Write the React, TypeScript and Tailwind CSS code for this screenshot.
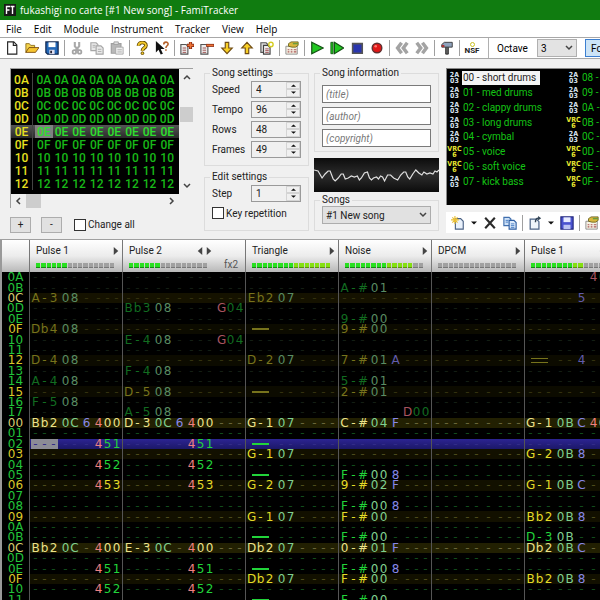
import { Fragment, type ReactNode } from "react";
import clsx from "clsx";

type Channel = {
  name: string;
  level: number;
  fx: number;
  width: string;
  rows: Record<number, string>;
};

const ui = "font-[Roboto,sans-serif]";

const menus = ["File", "Edit", "Module", "Instrument", "Tracker", "View", "Help"];

const frames = ["0A", "0B", "0C", "0D", "0E", "0F", "10", "11", "12"];

const songSettings = [
  { label: "Speed", value: "4" },
  { label: "Tempo", value: "96" },
  { label: "Rows", value: "48" },
  { label: "Frames", value: "49" },
];

const instruments = [
  { id: "00", name: "short drums", chip: "2A03" },
  { id: "01", name: "med drums", chip: "2A03" },
  { id: "02", name: "clappy drums", chip: "2A03" },
  { id: "03", name: "long drums", chip: "2A03" },
  { id: "04", name: "cymbal", chip: "2A03" },
  { id: "05", name: "voice", chip: "VRC6" },
  { id: "06", name: "soft voice", chip: "VRC6" },
  { id: "07", name: "kick bass", chip: "2A03" },
  { id: "08", name: "", chip: "2A03" },
  { id: "09", name: "", chip: "2A03" },
  { id: "0A", name: "", chip: "2A03" },
  { id: "0B", name: "", chip: "VRC6" },
  { id: "0C", name: "", chip: "2A03" },
  { id: "0D", name: "", chip: "VRC6" },
  { id: "0E", name: "", chip: "VRC6" },
  { id: "0F", name: "", chip: "VRC6" },
];

// 0A..17 belong to the previous frame, 00..11 to the current one
const PREVIOUS = 14;
const CURSOR = 16;
const rowNumbers = Array.from({ length: 32 }, (_, i) => (i < PREVIOUS ? i + 10 : i - PREVIOUS));

// note, instrument, volume, effects
const channels: Channel[] = [
  {
    name: "Pulse 1",
    level: 6,
    fx: 1,
    width: "w-[93px]",
    rows: {
      2: "A-3 08", 5: "Db4 08", 8: "D-4 08", 10: "A-4 08", 12: "F-5 08",
      14: "Bb2 0C 6 400", 16: "... .. . 451", 18: "... .. . 452", 20: "... .. . 453",
      26: "Bb2 0C . 400", 28: "... .. . 451", 30: "... .. . 452",
    },
  },
  {
    name: "Pulse 2",
    level: 6,
    fx: 2,
    width: "w-[123px]",
    rows: {
      3: "Bb3 08 . ... G04", 6: "E-4 08 . ... G04", 9: "F-4 08", 11: "D-5 08", 13: "A-5 08",
      14: "D-3 0C 6 400", 16: "... .. . 451", 18: "... .. . 452", 20: "... .. . 453",
      26: "E-3 0C . 400", 28: "... .. . 451", 30: "... .. . 452",
    },
  },
  {
    name: "Triangle",
    level: 15,
    fx: 1,
    width: "w-[93px]",
    rows: {
      2: "Eb2 07", 5: "cut", 8: "D-2 07", 11: "cut", 14: "G-1 07", 16: "cut", 17: "G-1 07",
      19: "cut", 20: "G-2 07", 23: "G-1 07", 25: "cut", 26: "Db2 07", 28: "cut", 29: "Db2 07", 31: "cut",
    },
  },
  {
    name: "Noise",
    level: 13,
    fx: 1,
    width: "w-[93px]",
    rows: {
      1: "A-# 01", 4: "9-# 00", 5: "9-# 00", 8: "7-# 01 A", 10: "5-# 01", 11: "2-# 01",
      13: "... .. . D00", 14: "C-# 04 F", 19: "F-# 00 8", 20: "9-# 02 F", 22: "F-# 00 8",
      23: "F-# 00", 25: "F-# 00", 26: "0-# 01 F", 28: "F-# 00 8", 29: "F-# 00", 31: "F-# 00",
    },
  },
  { name: "DPCM", level: 0, fx: 1, width: "w-[93px]", rows: {} },
  {
    name: "Pulse 1",
    level: 10,
    fx: 2,
    width: "w-[123px]",
    rows: {
      0: "... .. . 400", 2: "... .. 5", 8: "rel .. 4", 14: "G-1 0B C 400", 17: "G-2 0B 8",
      20: "G-1 0B C", 23: "Bb2 0B 8", 25: "D-3 0B", 26: "Db2 0B C", 29: "Bb2 0B 8",
    },
  },
];

function Svg({ children }: { children: ReactNode }) {
  return (
    <svg viewBox="0 0 16 16" className="h-[14px] w-[14px]" aria-hidden="true">
      {children}
    </svg>
  );
}

const page = "M3 1h7l3.5 3.5V15H3z";

const icons = {
  create: (
    <Svg>
      <path d={page} fill="#fff" stroke="#222" strokeWidth="1.3" />
      <path d="M9.5 1v4h4" fill="none" stroke="#222" strokeWidth="1.3" />
    </Svg>
  ),
  open: (
    <Svg>
      <path d="M1 13V3h4l1.5 2H11v3H5z" fill="#f4d34c" stroke="#8c6a14" />
      <path d="M1 13l3.5-5.5H16L12 13z" fill="#f7c531" stroke="#7a4d12" />
    </Svg>
  ),
  save: (
    <Svg>
      <path d="M1 1h14v14H3l-2-2z" fill="#2468b8" stroke="#10264e" strokeWidth="1.4" />
      <path d="M4 1.5h8V7H4z" fill="#fff" />
      <path d="M5 10h6v5H5z" fill="#dde" />
      <path d="M6 11h2v3H6z" fill="#223" />
    </Svg>
  ),
  cut: (
    <Svg>
      <path d="M5.5 1v5l4 5M10.5 1v5l-4 5" fill="none" stroke="#aaa" strokeWidth="2.4" />
      <circle cx="5" cy="12.5" r="2" fill="none" stroke="#a4a4a4" strokeWidth="2" />
      <circle cx="11" cy="12.5" r="2" fill="none" stroke="#a4a4a4" strokeWidth="2" />
    </Svg>
  ),
  copy: (
    <Svg>
      <path d="M1 2h6l2 2v7H1z" fill="#e8e8e8" stroke="#a6a6a6" strokeWidth="1.3" />
      <path d="M7 5.5h5.5L15 8v7H7z" fill="#e8e8e8" stroke="#a6a6a6" strokeWidth="1.3" />
      <path d="M3 5h3M3 7h3M9 9.5h4M9 12h4" stroke="#aaa" />
    </Svg>
  ),
  paste: (
    <Svg>
      <path d="M1.5 3h11v11h-11z" fill="#b8b8b8" stroke="#a0a0a0" strokeWidth="1.4" />
      <path d="M4.5 1h5v3h-5z" fill="#ddd" stroke="#a0a0a0" />
      <path d="M6.5 7h8.5v8H6.5z" fill="#eee" stroke="#a6a6a6" />
      <path d="M8.5 10h5M8.5 12.5h5" stroke="#aaa" />
    </Svg>
  ),
  help: (
    <Svg>
      <path d="M4 5.5C4 0.5 12.5 0.5 12.5 5c0 3-4 2.8-4 6" fill="none" stroke="#5b4300" strokeWidth="4.2" />
      <path d="M4 5.5C4 0.5 12.5 0.5 12.5 5c0 3-4 2.8-4 6" fill="none" stroke="#f3c92d" strokeWidth="2.2" />
      <circle cx="8.5" cy="14" r="1.6" fill="#f3c92d" stroke="#5b4300" />
    </Svg>
  ),
  whatsThis: (
    <Svg>
      <path d="M1 0v13l3-3 2.500 5.500 2.500-1L6.500 9H11z" fill="#111" />
      <path d="M10 4C10 0.5 15 0.5 15 3.5c0 2-2.5 2-2.5 4.5M12.5 9.5V11" fill="none" stroke="#b5622c" strokeWidth="1.8" />
    </Svg>
  ),
  addFrame: (
    <Svg>
      <path d="M1 4h6l2 2v9H1z" fill="#eee" stroke="#555" strokeWidth="1.3" />
      <path d="M3 8h4M3 10.5h4M3 13h4" stroke="#944" />
      <path d="M12 1v8M8 5h8" stroke="#7d2413" strokeWidth="3.6" />
      <path d="M12 1.5v7M8.5 5h7" stroke="#ee7436" strokeWidth="1.8" />
    </Svg>
  ),
  removeFrame: (
    <Svg>
      <path d="M1 4h6l2 2v9H1z" fill="#eee" stroke="#555" strokeWidth="1.3" />
      <path d="M3 8h4M3 10.5h4M3 13h4" stroke="#944" />
      <path d="M7 5h9" stroke="#7d2413" strokeWidth="3.4" />
      <path d="M7.5 5h8" stroke="#ee7436" strokeWidth="1.8" />
    </Svg>
  ),
  moveDown: (
    <Svg>
      <path d="M6 1.5h4V8h4l-6 6.5L2 8h4z" fill="#f8cf25" stroke="#704c14" strokeWidth="1.3" />
    </Svg>
  ),
  moveUp: (
    <Svg>
      <path d="M6 14.5h4V8h4L8 1.5 2 8h4z" fill="#f8cf25" stroke="#704c14" strokeWidth="1.3" />
    </Svg>
  ),
  duplicate: (
    <Svg>
      <path d="M1 2h6l2 2v9H1z" fill="#ddd" stroke="#555" strokeWidth="1.3" />
      <path d="M4 5h5l2.5 2.5V15H4z" fill="#eee" stroke="#444" strokeWidth="1.3" />
      <path d="M6 9h4M6 11h4M6 13h4" stroke="#944" />
      <circle cx="12.5" cy="4" r="2.5" fill="#fff" stroke="#d4cc20" strokeWidth="1.6" />
    </Svg>
  ),
  properties: (
    <Svg>
      <path d="M1 6h13v9H1z" fill="#f6f3e6" stroke="#888" />
      <path d="M3 10h2M3 12.5h2M6.5 10h2M6.5 12.5h2M10 10h3M10 12.5h3" stroke="#a55" strokeWidth="1.4" />
      <path d="M4 3l3-2h8v4l-3 2H8L4 6z" fill="#d9b73e" stroke="#6c6620" />
      <path d="M9 3h6" stroke="#6b9c3e" strokeWidth="1.6" />
    </Svg>
  ),
  play: (
    <Svg>
      <path d="M2 1.5L15 8 2 14.5z" fill="#21c821" stroke="#145214" strokeWidth="1.4" />
    </Svg>
  ),
  playPattern: (
    <Svg>
      <path d="M1 1.5h2.5v13H1z" fill="#21c821" stroke="#145214" />
      <path d="M5 1.5L15.5 8 5 14.5z" fill="#21c821" stroke="#145214" strokeWidth="1.4" />
    </Svg>
  ),
  stop: (
    <Svg>
      <path d="M3 3h11v11H3z" fill="#2a36ae" stroke="#555" strokeWidth="1.8" />
    </Svg>
  ),
  record: (
    <Svg>
      <circle cx="8" cy="8" r="5.5" fill="#e01717" stroke="#5f3030" strokeWidth="1.6" />
      <circle cx="6.5" cy="6" r="1.5" fill="#ff7a70" />
    </Svg>
  ),
  previous: (
    <Svg>
      <path d="M7.5 2L3 8l4.5 6M14 2L9.5 8l4.5 6" fill="none" stroke="#a3a3a3" strokeWidth="4" />
    </Svg>
  ),
  next: (
    <Svg>
      <path d="M2 2l4.5 6L2 14M8.5 2L13 8l-4.5 6" fill="none" stroke="#a3a3a3" strokeWidth="4" />
    </Svg>
  ),
  settings: (
    <Svg>
      <path d="M6.5 6h3v9h-3z" fill="#666" stroke="#222" />
      <path d="M2 4l3-2.5h9V7H2z" fill="#8fa3bd" stroke="#333" />
      <path d="M2 4.5h3V7H2z" fill="#a33" />
    </Svg>
  ),
  removeInstrument: (
    <Svg>
      <path d="M2.5 2l11 12M13.5 2l-11 12" fill="none" stroke="#2b2b2b" strokeWidth="2.4" />
    </Svg>
  ),
  newInstrument: (
    <Svg>
      <path d="M5 3h6l3 3v9H5z" fill="#eaf2fc" stroke="#4b6285" strokeWidth="1.3" />
      <path d="M4.5 0v9M0 4.5h9M1.5 1.5l6 6M7.5 1.5l-6 6" stroke="#eabf33" strokeWidth="1.3" />
    </Svg>
  ),
  cloneInstrument: (
    <Svg>
      <path d="M1 1.5h6l2 2V11H1z" fill="#cfe2f8" stroke="#416fae" strokeWidth="1.3" />
      <path d="M7 5h5.500L15 7.500V15H7z" fill="#dceafb" stroke="#2f5fa3" strokeWidth="1.3" />
      <path d="M9 9h4M9 11h4M9 13h4M3 5h3M3 7h3" stroke="#3f77c0" />
    </Svg>
  ),
  loadInstrument: (
    <Svg>
      <path d="M2.500 3.500h7l3 3V15h-10z" fill="#eef4fb" stroke="#4b6285" strokeWidth="1.4" />
      <path d="M8.500 7c0-3 1-4.500 3.500-4.500" fill="none" stroke="#345" strokeWidth="1.6" />
      <path d="M11.500 0L15 2.500 11.500 5z" fill="#345" />
    </Svg>
  ),
  saveInstrument: (
    <Svg>
      <path d="M1 1h14v14H1z" fill="#4a52cf" stroke="#23297d" strokeWidth="1.3" />
      <path d="M4 1.5h8V7H4z" fill="#e8ecff" />
      <path d="M4 10h8v5H4z" fill="#bcc3f2" />
    </Svg>
  ),
};

const toolbar: [string, ReactNode][][] = [
  [["New", icons.create], ["Open", icons.open], ["Save", icons.save]],
  [["Cut", icons.cut], ["Copy", icons.copy], ["Paste", icons.paste]],
  [["Help", icons.help], ["What's this", icons.whatsThis]],
  [
    ["Insert frame", icons.addFrame],
    ["Remove frame", icons.removeFrame],
    ["Move frame down", icons.moveDown],
    ["Move frame up", icons.moveUp],
    ["Duplicate frame", icons.duplicate],
  ],
  [["Module properties", icons.properties]],
  [["Play", icons.play], ["Play pattern", icons.playPattern], ["Stop", icons.stop], ["Record", icons.record]],
  [["Previous song", icons.previous], ["Next song", icons.next]],
  [["Settings", icons.settings]],
];

function Separator() {
  return (
    <div className="flex w-[5px] shrink-0 justify-center">
      <div className="h-4 w-px bg-[#a0a0a0]" />
    </div>
  );
}

function IconButton({ label, children }: { label: string; children: ReactNode }) {
  return (
    <button aria-label={label} className="flex h-5 w-5 shrink-0 items-center justify-center">
      {children}
    </button>
  );
}

function Chevron({ dir }: { dir: "up" | "down" | "left" | "right" }) {
  const d = {
    up: "M1 6l3-3 3 3",
    down: "M1 2l3 3 3-3",
    left: "M6 1L3 4l3 3",
    right: "M2 1l3 3-3 3",
  }[dir];
  return (
    <svg viewBox="0 0 8 8" className="h-2 w-2" aria-hidden="true">
      <path d={d} fill="none" stroke="#444" strokeWidth="1.5" />
    </svg>
  );
}

function Triangle({ dir, className }: { dir: "up" | "down" | "left" | "right"; className: string }) {
  const d = { up: "M0 7L4 1l4 6z", down: "M0 1h8L4 7z", left: "M7 0v8L1 4z", right: "M1 0l6 4-6 4z" }[dir];
  return (
    <svg viewBox="0 0 8 8" preserveAspectRatio="none" className={className} aria-hidden="true">
      <path d={d} fill="currentColor" />
    </svg>
  );
}

function TitleBar() {
  return (
    <header className="flex h-5 shrink-0 items-center gap-1 bg-[#107c10] px-1">
      <svg viewBox="0 0 12 12" className="h-3 w-3" aria-hidden="true">
        <path d="M0 0h12v12H0z" fill="#191919" />
        <path d="M2.5 10V2.5H6M2.5 6h3M6.5 2.5h4M8.5 2.5V10" fill="none" stroke="#fff" strokeWidth="1.4" />
      </svg>
      <h1 className="text-[10px] leading-5 whitespace-nowrap text-white">fukashigi no carte [#1 New song] - FamiTracker</h1>
    </header>
  );
}

function MenuBar() {
  return (
    <nav className="flex h-[17px] shrink-0 items-center gap-3 bg-white px-1.5 text-[10px] text-black">
      {menus.map((m) => (
        <button key={m} className="leading-4">
          {m}
        </button>
      ))}
    </nav>
  );
}

function Toolbar() {
  return (
    <div className={clsx("flex h-[22px] shrink-0 items-center border-y border-[#a8a8a8] bg-white pl-0.5 text-[10px]", ui)}>
      {toolbar.map((group, i) => (
        <Fragment key={i}>
          {group.map(([label, icon]) => (
            <IconButton key={label} label={label}>
              {icon}
            </IconButton>
          ))}
          <Separator />
        </Fragment>
      ))}
      <button className="flex h-5 w-5 shrink-0 flex-col items-center justify-center">
        <span className="h-[5px] w-[5px] rounded-full border border-[#c8c020]" />
        <span className="text-[8px] leading-2 font-bold text-[#222]">NSF</span>
      </button>
      <div className="mx-1.5 h-5 w-px shrink-0 bg-[#b0b0b0]" />
      <label htmlFor="octave" className="ml-0.5 w-10 shrink-0">
        Octave
      </label>
      <div className="relative w-10 shrink-0">
        <select id="octave" className="h-[18px] w-full appearance-none border border-[#b0b0b0] bg-[#e3e3e3] pl-[3px]">
          <option>3</option>
        </select>
        <div className="pointer-events-none absolute top-[5px] right-1">
          <Chevron dir="down" />
        </div>
      </div>
      <button className="ml-2 h-[18px] shrink-0 border border-[#3c7fd0] bg-[#cce4f7] px-[5px] whitespace-nowrap">Follow mode</button>
    </div>
  );
}

function FrameEditor() {
  return (
    <div className="w-[183px] shrink-0 pt-[9px]">
      <div className="grid grid-cols-[168px_15px] grid-rows-[125px_14px] border-t border-l border-[#a0a0a0]">
        <table className="block bg-black pt-1 font-['Liberation_Sans_Narrow','Roboto',sans-serif] text-[12px] font-medium">
          <tbody className="block">
            {frames.map((f) => (
              <tr
                key={f}
                className={clsx("flex h-[13px] leading-[14px]", f === "0E" && "bg-linear-to-b from-[#555] to-[#2a2a2a]")}
              >
                <th className="w-[22px] border-r border-[#444] text-center font-medium text-[#e8e020]">{f}</th>
                {Array.from({ length: 8 }, (_, c) => (
                  <td
                    key={c}
                    className={clsx(
                      "flex-1 text-center first-of-type:ml-[2px] last:mr-[3px]",
                      f === "0E" ? "text-[#2de02d]" : "text-[#18b818]",
                      f === "0E" && c === 0 && "bg-[#808080]",
                    )}
                  >
                    {f}
                  </td>
                ))}
              </tr>
            ))}
          </tbody>
        </table>
        <div className="flex flex-col items-center py-1">
          <Chevron dir="up" />
          <div className="mt-[26px] mb-auto h-[15px] w-[13px] bg-[#cdcdcd]" />
          <Chevron dir="down" />
        </div>
        <div className="flex items-center px-[3px]">
          <Chevron dir="left" />
          <div className="ml-1 h-[14px] w-[15px] bg-[#cdcdcd]" />
          <div className="ml-auto">
            <Chevron dir="right" />
          </div>
        </div>
      </div>
      <div className="mt-2 flex h-[17px] items-center">
        <button className="h-4 w-[21px] border border-[#adadad] bg-[#e1e1e1] leading-3">+</button>
        <button className="ml-[10px] h-4 w-[21px] border border-[#adadad] bg-[#e1e1e1] leading-3">-</button>
        <label className="ml-3 flex items-center gap-[2px]">
          <input type="checkbox" className="h-3 w-3 appearance-none border border-[#333] bg-white" />
          Change all
        </label>
      </div>
    </div>
  );
}

function Spinner({ label, value }: { label: string; value: string }) {
  const id = label.toLowerCase();
  return (
    <div className="flex h-5 items-center">
      <label htmlFor={id} className="w-[39px]">
        {label}
      </label>
      <div className="flex h-[17px] w-[50px] border border-[#9a9a9a]">
        <input id={id} defaultValue={value} className="w-[34px] bg-[#f0f0f0] pl-1" />
        <div className="flex flex-1 flex-col">
          <button aria-label={`${label} up`} className="flex flex-1 items-center justify-center border border-[#d4d4d4] text-[#111]">
            <Triangle dir="up" className="h-[3px] w-[5px]" />
          </button>
          <button aria-label={`${label} down`} className="flex flex-1 items-center justify-center border border-[#d4d4d4] text-[#111]">
            <Triangle dir="down" className="h-[3px] w-[5px]" />
          </button>
        </div>
      </div>
    </div>
  );
}

function Group({ title, className, children }: { title: string; className: string; children: ReactNode }) {
  return (
    <fieldset className={clsx("border border-[#dcdcdc] px-[7px]", className)}>
      <legend className="-ml-0.5 h-3 px-0.5 leading-3">{title}</legend>
      {children}
    </fieldset>
  );
}

function Waveform() {
  return (
    <svg viewBox="0 0 124 34" preserveAspectRatio="none" className="mt-1.5 h-[34px] w-full" aria-hidden="true">
      <defs>
        <linearGradient id="scope" x1="0" y1="0" x2="0" y2="1">
          <stop offset="0" stopColor="#0c0c0c" />
          <stop offset="0.5" stopColor="#2c2c2c" />
          <stop offset="1" stopColor="#0c0c0c" />
        </linearGradient>
      </defs>
      <path d="M0 0h124v34H0z" fill="url(#scope)" />
      <polyline
        points="0,12 4,13 8,20 11,16 14,13 16,13 19,21 21,23 24,20 27,16 29,16 31,21 34,20 37,18 40,19 43,18 45,22 47,20 50,15 53,14 55,20 57,22 59,20 62,19 64,21 66,18 68,19 70,23 73,17 76,17 79,20 81,21 83,22 86,17 89,14 91,14 93,19 95,21 98,16 101,12 104,15 107,17 109,14 112,16 115,15 118,16 120,13 122,14 124,12"
        fill="none"
        stroke="#e0e0e0"
        strokeWidth="1.2"
      />
    </svg>
  );
}

function ChipIcon({ chip }: { chip: string }) {
  const vrc = chip === "VRC6";
  return (
    <span
      className={clsx(
        "flex w-[15px] flex-col items-center font-['DejaVu_Sans_Condensed',sans-serif] text-[7px] leading-[6px] font-bold",
        vrc ? "text-[#e8e830]" : "text-[#d8e4f0]",
      )}
    >
      <span>{vrc ? "VRC" : "2A"}</span>
      <span>{vrc ? "6" : "03"}</span>
    </span>
  );
}

function InstrumentList() {
  return (
    <div className="flex min-w-0 flex-1 flex-col pt-[9px]">
      <div className="h-[137px] overflow-hidden border-t border-l border-[#888] bg-black pt-[2px]">
        <ul className="grid h-[118px] w-[238px] grid-flow-col grid-cols-[119px_119px] grid-rows-[repeat(8,minmax(0,1fr))]">
          {instruments.map((inst, i) => (
            <li key={inst.id} className="flex items-center whitespace-pre">
              <ChipIcon chip={inst.chip} />
              <span className={clsx("px-px leading-[14px]", i === 0 ? "bg-[#f4f4f4] pr-1 text-[#222]" : "text-[#14c414]")}>
                {inst.id} - {inst.name}
              </span>
            </li>
          ))}
        </ul>
      </div>
      <div className="mt-[7px] flex h-[21px] items-center overflow-hidden bg-white pl-0.5 text-[#111]">
        <IconButton label="New instrument">{icons.newInstrument}</IconButton>
        <button aria-label="New instrument options" className="flex w-3 shrink-0 justify-center">
          <Triangle dir="down" className="h-1 w-1.5" />
        </button>
        <IconButton label="Remove instrument">{icons.removeInstrument}</IconButton>
        <IconButton label="Clone instrument">{icons.cloneInstrument}</IconButton>
        <Separator />
        <IconButton label="Load instrument">{icons.loadInstrument}</IconButton>
        <button aria-label="Load instrument options" className="flex w-3 shrink-0 justify-center">
          <Triangle dir="down" className="h-1 w-1.5" />
        </button>
        <IconButton label="Save instrument">{icons.saveInstrument}</IconButton>
        <Separator />
        <IconButton label="Edit instrument">{icons.properties}</IconButton>
      </div>
    </div>
  );
}

function ControlPanel() {
  return (
    <section className={clsx("flex h-[181px] shrink-0 border-b border-[#a0a0a0] bg-[#f0f0f0] pl-[10px] text-[10px] text-[#222]", ui)}>
      <FrameEditor />
      <div className="ml-[11px] w-[103px] shrink-0 pt-2">
        <Group title="Song settings" className="h-[99px]">
          {songSettings.map((s) => (
            <Spinner key={s.label} {...s} />
          ))}
        </Group>
        <Group title="Edit settings" className="mt-[5px] h-[60px]">
          <Spinner label="Step" value="1" />
          <label className="flex h-5 items-center gap-[2px] whitespace-nowrap">
            <input type="checkbox" className="h-3 w-3 shrink-0 appearance-none border border-[#333] bg-white" />
            Key repetition
          </label>
        </Group>
      </div>
      <div className="ml-[7px] w-[125px] shrink-0 pt-2">
        <Group title="Song information" className="h-[85px]">
          <div className="flex flex-col gap-1 pt-1.5">
            {["(title)", "(author)", "(copyright)"].map((p) => (
              <input
                key={p}
                aria-label={p}
                placeholder={p}
                className="h-[18px] w-full border border-[#7a7a7a] bg-white px-[3px] italic placeholder:text-[#777]"
              />
            ))}
          </div>
        </Group>
        <Waveform />
        <Group title="Songs" className="mt-[2px] h-[37px]">
          <div className="relative">
            <select aria-label="Songs" className="h-[18px] w-full appearance-none border border-[#adadad] bg-[#e1e1e1] pl-[3px]">
              <option>#1 New song</option>
            </select>
            <div className="pointer-events-none absolute top-[5px] right-1">
              <Chevron dir="down" />
            </div>
          </div>
        </Group>
      </div>
      <div className="ml-[7px] flex min-w-0 flex-1">
        <InstrumentList />
      </div>
    </section>
  );
}

function ChannelHeader({ channel }: { channel: Channel }) {
  return (
    <th className={clsx("shrink-0 border-l border-[#777] pl-1.5 text-left font-normal", channel.width)}>
      <div className="flex h-[21px] w-[83px] items-center text-[#444]">
        <span className="flex-1 text-[#222]">{channel.name}</span>
        {channel.fx > 1 && <Triangle dir="left" className="mr-[3px] h-2 w-1.5" />}
        <Triangle dir="right" className="h-2 w-1.5" />
      </div>
      <div className="flex h-2 items-center">
        <div className="grid w-[78px] shrink-0 grid-cols-[repeat(15,minmax(0,1fr))] gap-px">
          {Array.from({ length: 15 }, (_, i) => (
            <span
              key={i}
              className={clsx(
                "h-[5px] border-b",
                i >= channel.level && "border-[#777] bg-[#a0a0a0]",
                i < channel.level && i < 8 && "border-[#158815] bg-[#28e020]",
                i < channel.level && i >= 8 && "border-[#5a9010] bg-[#84e010]",
              )}
            />
          ))}
        </div>
        {channel.fx > 1 && <span className="ml-[17px] leading-2 text-[#555]">fx{channel.fx}</span>}
      </div>
    </th>
  );
}

function PatternCell({ channel, row, tone, dash }: { channel: Channel; row: number; tone: string; dash: string }) {
  const parts = (channel.rows[row] ?? "").split(" ");
  const note = parts[0] || "...";
  const drawn = note === "cut" || note === "rel";
  const old = row < PREVIOUS;
  const inst = old ? "text-[#5a8c62]" : "text-[#80d090]";
  const fields = [
    { text: drawn ? "" : note, colors: [tone, tone, tone] },
    { text: parts[1] ?? "..", colors: [inst, inst] },
    { text: parts[2] ?? ".", colors: [old ? "text-[#625cac]" : "text-[#8888e8]"] },
    ...Array.from({ length: channel.fx }, (_, i) => ({
      text: parts[3 + i] ?? "...",
      colors: [old ? "text-[#a85460]" : "text-[#f08080]", tone, tone],
    })),
  ];

  return (
    <td className={clsx("flex shrink-0 items-center gap-[3px] border-l border-[#555] pl-px", channel.width)}>
      {fields.map((field, i) => (
        <span
          key={i}
          className={clsx("flex shrink-0", row === CURSOR && channel === channels[0] && i === 0 && "bg-[#8c8c96]")}
        >
          {i === 0 && drawn && (
            <span className={clsx("flex w-[27px] flex-col items-center gap-[3px]", tone)}>
              <span className={clsx("w-[17px] bg-current", note === "rel" ? "h-px" : "h-0.5")} />
              {note === "rel" && <span className="h-px w-[17px] bg-current" />}
            </span>
          )}
          {field.text.split("").map((c, j) => (
            <span key={j} className={clsx("w-[9px] text-center", c === "." ? dash : field.colors[j])}>
              {c === "." ? "-" : c}
            </span>
          ))}
        </span>
      ))}
    </td>
  );
}

function PatternEditor() {
  return (
    <main className="min-h-0 flex-1 overflow-hidden border-l-2 border-[#999] bg-black">
      <table className="block">
        <thead className={clsx("block bg-linear-to-b from-white via-[#ececec] to-[#b8b8b8] text-[10px]", ui)}>
          <tr className="flex h-8">
            <th className="w-[27px] shrink-0" aria-label="Row" />
            {channels.map((c, i) => (
              <ChannelHeader key={i} channel={c} />
            ))}
          </tr>
        </thead>
        <tbody className="grid h-[333px] grid-rows-[repeat(32,minmax(0,1fr))] font-['DejaVu_Sans',sans-serif] text-[12px] leading-[10px]">
          {rowNumbers.map((n, i) => {
            const strong = n % 12 === 0;
            const beat = n % 3 === 0;
            const old = i < PREVIOUS;
            let tone = strong ? "text-[#ece28a]" : beat ? "text-[#e4dc28]" : "text-[#22d43a]";
            let dash = strong ? "text-[#69653a]" : beat ? "text-[#4c4a1c]" : "text-[#124c1c]";
            if (old) {
              tone = beat ? "text-[#77731c]" : "text-[#126c20]";
              dash = beat ? "text-[#33310f]" : "text-[#141e14]";
            }
            if (i === CURSOR) dash = "text-[#322c88]";
            return (
              <tr
                key={i}
                className={clsx(
                  "flex",
                  i === CURSOR && "bg-linear-to-b from-[#2c2492] to-[#1c1868]",
                  strong && (old ? "bg-[#151200]" : "bg-[#222002]"),
                  beat && !strong && (old ? "bg-[#0c0b00]" : "bg-[#121000]"),
                )}
              >
                <th
                  className={clsx(
                    "flex w-[27px] shrink-0 items-center justify-center bg-black font-normal",
                    strong ? "text-[#d8cc70]" : beat ? "text-[#dcc828]" : "text-[#22c43a]",
                  )}
                >
                  {n.toString(16).toUpperCase().padStart(2, "0")}
                </th>
                {channels.map((c, k) => (
                  <PatternCell key={k} channel={c} row={i} tone={tone} dash={dash} />
                ))}
              </tr>
            );
          })}
        </tbody>
      </table>
    </main>
  );
}

export default function App() {
  return (
    <div className="flex h-screen flex-col overflow-hidden bg-[#f0f0f0] font-['Open_Sans',sans-serif]">
      <TitleBar />
      <MenuBar />
      <Toolbar />
      <ControlPanel />
      <PatternEditor />
    </div>
  );
}
